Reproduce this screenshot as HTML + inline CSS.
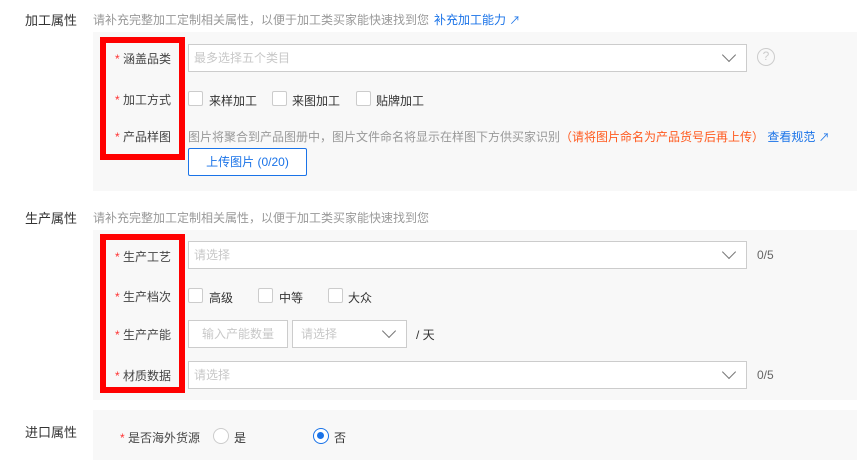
<!DOCTYPE html>
<html><head><meta charset="utf-8"><style>
*{box-sizing:border-box;margin:0;padding:0}
body{width:857px;height:464px;background:#fff;font-family:"Liberation Sans","Noto Sans CJK SC",sans-serif;font-size:12px;color:#333;position:relative;overflow:hidden}
.a{position:absolute;white-space:nowrap}
.title{font-size:13px;color:#333}
.hint{color:#999;font-size:12px}
.panel{position:absolute;background:#f8f8f8;left:93px;right:0}
.red{position:absolute;border:6px solid #f00;left:100px;width:85px}
.star{color:#f33}
.inp{position:absolute;background:#fff;border:1px solid #ccc;color:#c8c8c8;padding-left:5px;line-height:27px}
.chev{position:absolute;right:12px;top:5px;width:10px;height:10px;border-right:1.5px solid #777;border-bottom:1.5px solid #777;transform:rotate(45deg)}
.cb{position:absolute;width:15px;height:15px;border:1px solid #ccc;background:#fff;border-radius:2px}
.blue{color:#1a73e8}
.lb{color:#444}
</style></head><body>
<div class="a title" style="left:25px;top:10px">加工属性</div>
<div class="a hint" style="left:93px;top:11px">请补充完整加工定制相关属性，以便于加工类买家能快速找到您</div>
<div class="a blue" style="left:434px;top:11px">补充加工能力 <span style="font-size:11px">&#x2197;</span></div>

<div class="panel" style="top:32px;height:159px"></div>
<div class="red" style="top:37px;height:123px"></div>
<div class="a lb" style="left:115px;top:50px"><span class="star">*</span> 涵盖品类</div>
<div class="a lb" style="left:115px;top:91px"><span class="star">*</span> 加工方式</div>
<div class="a lb" style="left:115px;top:128px"><span class="star">*</span> 产品样图</div>
<div class="inp" style="left:188px;top:44px;width:559px;height:28px">最多选择五个类目<div class="chev"></div></div>
<div class="a" style="left:757px;top:48px;width:18px;height:18px;border:1.5px solid #ccc;border-radius:50%;color:#ccc;text-align:center;line-height:15px;font-size:12px">?</div>
<div class="cb" style="left:188px;top:91px"></div><div class="a" style="left:209px;top:92px">来样加工</div>
<div class="cb" style="left:272px;top:91px"></div><div class="a" style="left:292px;top:92px">来图加工</div>
<div class="cb" style="left:356px;top:91px"></div><div class="a" style="left:376px;top:92px">贴牌加工</div>
<div class="a hint" style="left:188px;top:128px">图片将聚合到产品图册中，图片文件命名将显示在样图下方供买家识别<span style="color:#ff5a1f">（请将图片命名为产品货号后再上传）</span> <span class="blue">查看规范 <span style="font-size:11px">&#x2197;</span></span></div>
<div class="a" style="left:188px;top:148px;width:119px;height:28px;border:1px solid #1a73e8;border-radius:2px;background:#fff;color:#1a73e8;text-align:center;line-height:26px">上传图片 (0/20)</div>

<div class="a title" style="left:25px;top:208px">生产属性</div>
<div class="a hint" style="left:93px;top:209px">请补充完整加工定制相关属性，以便于加工类买家能快速找到您</div>
<div class="panel" style="top:230px;height:170px"></div>
<div class="red" style="top:234px;height:159px"></div>
<div class="a lb" style="left:115px;top:248px"><span class="star">*</span> 生产工艺</div>
<div class="a lb" style="left:115px;top:288px"><span class="star">*</span> 生产档次</div>
<div class="a lb" style="left:115px;top:326px"><span class="star">*</span> 生产产能</div>
<div class="a lb" style="left:115px;top:367px"><span class="star">*</span> 材质数据</div>
<div class="inp" style="left:188px;top:241px;width:559px;height:28px">请选择<div class="chev"></div></div>
<div class="a" style="left:757px;top:248px;color:#666">0/5</div>
<div class="cb" style="left:188px;top:288px"></div><div class="a" style="left:209px;top:289px">高级</div>
<div class="cb" style="left:258px;top:288px"></div><div class="a" style="left:279px;top:289px">中等</div>
<div class="cb" style="left:328px;top:288px"></div><div class="a" style="left:348px;top:289px">大众</div>
<div class="inp" style="left:188px;top:320px;width:100px;height:28px;text-align:center;padding:0">输入产能数量</div>
<div class="inp" style="left:292px;top:320px;width:115px;height:28px;padding-left:8px">请选择<div class="chev"></div></div>
<div class="a" style="left:416px;top:326px">/ 天</div>
<div class="inp" style="left:188px;top:361px;width:559px;height:28px">请选择<div class="chev"></div></div>
<div class="a" style="left:757px;top:368px;color:#666">0/5</div>

<div class="a title" style="left:25px;top:422px">进口属性</div>
<div class="panel" style="top:410px;height:50px"></div>
<div class="a lb" style="left:120px;top:429px"><span class="star">*</span> 是否海外货源</div>
<div class="a" style="left:213px;top:428px;width:16px;height:16px;border:1px solid #ccc;border-radius:50%;background:#fff"></div>
<div class="a" style="left:234px;top:429px">是</div>
<div class="a" style="left:313px;top:428px;width:16px;height:16px;border:1.5px solid #1a73e8;border-radius:50%;background:#fff"><div style="position:absolute;left:3px;top:3px;width:7px;height:7px;border-radius:50%;background:#1a73e8"></div></div>
<div class="a" style="left:334px;top:429px">否</div>
</body></html>
